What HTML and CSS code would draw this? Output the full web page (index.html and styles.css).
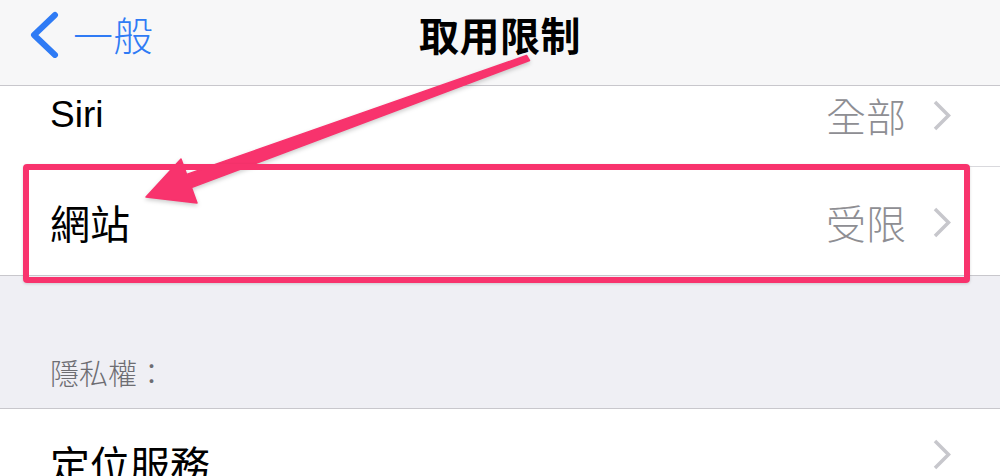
FILE: index.html
```html
<!DOCTYPE html>
<html lang="zh-Hant">
<head>
  <meta charset="UTF-8" />
  <title>取用限制</title>
  <meta name="viewport" content="width=device-width, initial-scale=1.0"/>
  <link rel="stylesheet" href="styles.css">
</head>
<body>
  <div class="screen">
    <header class="navbar">
      <a class="back" href="#">
        <svg class="back-icon" width="34" height="48" viewBox="0 0 34 48">
          <polyline points="26,5 5,25 26,45" fill="none" stroke="#2f7bf5" stroke-width="6" stroke-linecap="round" stroke-linejoin="round"/>
        </svg>
        <span>一般</span>
      </a>
      <h1 class="title">取用限制</h1>
      <div></div>
    </header>

    <div class="group">
      <div class="row first">
        <div class="row-inner">
          <span class="label latin">Siri</span>
          <span class="value">全部</span>
          <svg class="chevron" width="18" height="31" viewBox="0 0 18 31">
            <polyline points="2,2 15.5,15.5 2,29" fill="none" stroke="#c7c7cc" stroke-width="3.5"/>
          </svg>
        </div>
      </div>
      <div class="row tall highlighted">
        <div class="row-inner">
          <span class="label">網站</span>
          <span class="value">受限</span>
          <svg class="chevron" width="18" height="31" viewBox="0 0 18 31">
            <polyline points="2,2 15.5,15.5 2,29" fill="none" stroke="#c7c7cc" stroke-width="3.5"/>
          </svg>
        </div>
      </div>
    </div>

    <div class="section-title">隱私權：</div>

    <div class="group">
      <div class="row tall">
        <div class="row-inner">
          <span class="label">定位服務</span>
          <span class="value"></span>
          <svg class="chevron" width="18" height="31" viewBox="0 0 18 31">
            <polyline points="2,2 15.5,15.5 2,29" fill="none" stroke="#c7c7cc" stroke-width="3.5"/>
          </svg>
        </div>
      </div>
    </div>

    <!-- annotation arrow drawn over the screenshot -->
    <svg class="annotation" width="1000" height="476" viewBox="0 0 1000 476">
      <polygon points="146,197 181,159 186.6,174.4 526.5,55.5 529.5,60.5 191.4,187.6 197,203" fill="#f8336d" stroke="#f8336d" stroke-width="1.5" stroke-linejoin="round"/>
    </svg>
  </div>
</body>
</html>
```

FILE: styles.css
```css
body {
  margin: 0;
  background: #efeff4;
  font-family: "Liberation Sans", "Noto Sans CJK TC", sans-serif;
  color: #000;
}
.screen {
  position: relative;
  width: 1000px;
  height: 476px;
  overflow: hidden;
}
.navbar {
  display: grid;
  grid-template-columns: 1fr auto 1fr;
  align-items: center;
  height: 85px;
  background: #f7f7f8;
  border-bottom: 1px solid #c8c7cc;
}
.back {
  display: flex;
  align-items: center;
  gap: 10px;
  padding-left: 29px;
  color: #2f7bf5;
  text-decoration: none;
  font-family: "Noto Sans CJK TC", sans-serif;
  font-size: 40px;
  font-weight: 300;
  line-height: 48px;
  margin-top: -18px;
}
.title {
  margin: -18px 0 0;
  font-family: "Noto Sans CJK TC", sans-serif;
  font-size: 40px;
  font-weight: bold;
  line-height: 48px;
  letter-spacing: 0.5px;
}
.group {
  background: #fff;
  border-bottom: 1px solid #c8c7cc;
}
.row {
  padding-left: 50px;
}
.row-inner {
  display: flex;
  align-items: center;
  height: 80px;
  padding-right: 50px;
  border-bottom: 1px solid #d9d9dd;
  font-size: 40px;
  line-height: 48px;
}
.row:last-child .row-inner {
  border-bottom: none;
}
.row.first .row-inner {
  padding-bottom: 22px;
  height: 58px;
}
.row.tall .row-inner {
  height: 108px;
  padding-top: 2px;
  box-sizing: border-box;
}
.label {
  flex: 1;
  font-family: "Noto Sans CJK TC", sans-serif;
  font-weight: normal;
}
.label.latin {
  font-family: "Liberation Sans", sans-serif;
  font-size: 37px;
}
.value {
  color: #8e8e93;
  font-family: "Noto Sans CJK TC", sans-serif;
  font-weight: 300;
  margin-right: 27px;
  margin-left: 1px;
}
.chevron {
  display: block;
  margin-right: -1px;
}
.highlighted {
  position: relative;
}
.highlighted::before {
  content: "";
  position: absolute;
  left: 23px;
  right: 30px;
  top: -3px;
  bottom: -8px;
  border: 6px solid #f8336d;
  border-radius: 4px;
  box-shadow: 0 1px 3px rgba(0, 0, 0, 0.15);
  z-index: 2;
}
.section-title {
  padding: 82px 50px 22px;
  color: #6d6d72;
  font-family: "Noto Sans CJK TC", sans-serif;
  font-weight: 300;
  font-size: 29px;
  line-height: 28px;
  border-bottom: 1px solid #c8c7cc;
}
.section-title + .group .row-inner {
  align-items: flex-start;
  padding-top: 30px;
}
.annotation {
  position: absolute;
  left: 0;
  top: 0;
  pointer-events: none;
  filter: drop-shadow(0 2px 2px rgba(0, 0, 0, 0.2));
}
```
